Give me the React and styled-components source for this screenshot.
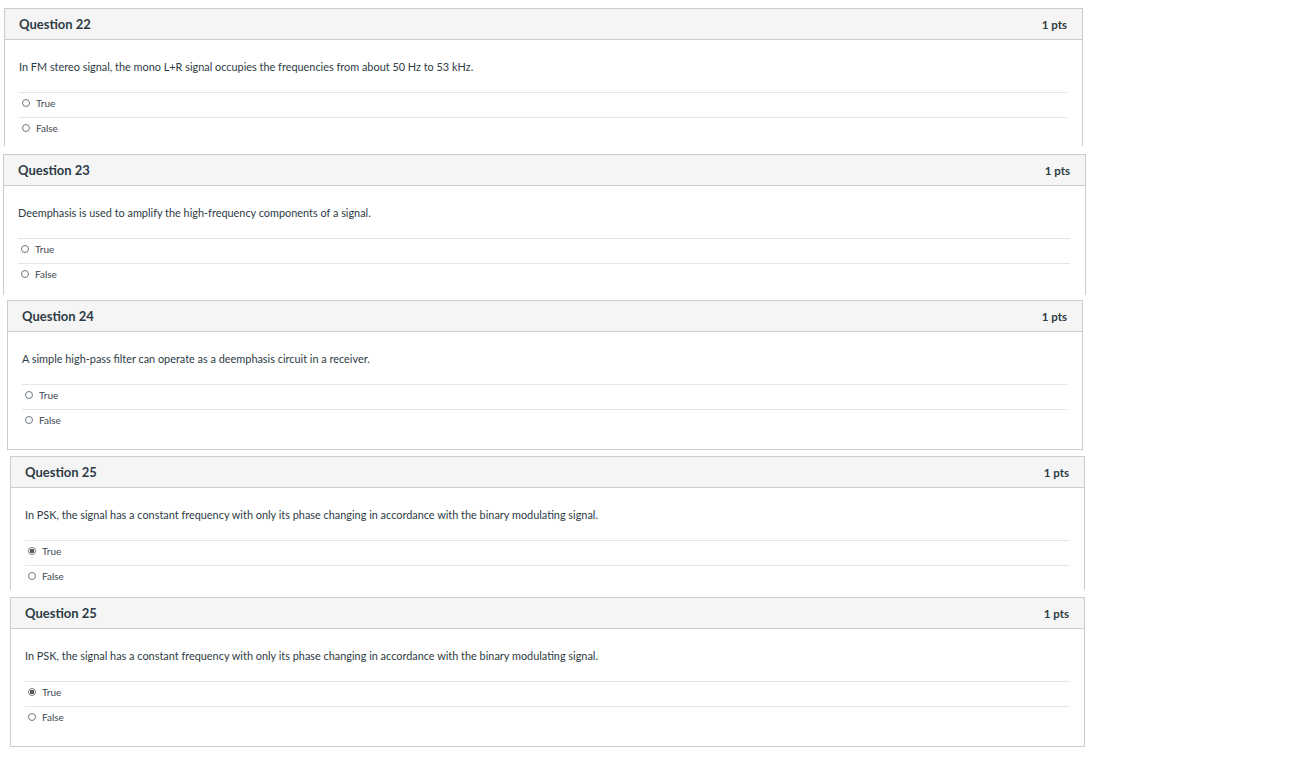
import React from "react";
import styled, { createGlobalStyle } from "styled-components";

const GlobalStyle = createGlobalStyle`
  html, body {
    margin: 0;
    padding: 0;
    background: #ffffff;
  }
  body {
    font-family: Lato, "Open Sans", "Liberation Sans", sans-serif;
    color: #2d3b45;
  }
`;

const questions = [
  {
    id: 1,
    title: "Question 22",
    text: "In FM stereo signal, the mono L+R signal occupies the frequencies from about 50 Hz to 53 kHz.",
    selected: null,
    offset: 4,
    width: 1079,
    gap: 8,
    cut: 138,
  },
  {
    id: 2,
    title: "Question 23",
    text: "Deemphasis is used to amplify the high-frequency components of a signal.",
    selected: null,
    offset: 3,
    width: 1083,
    gap: 8,
    cut: 141,
  },
  {
    id: 3,
    title: "Question 24",
    text: "A simple high-pass filter can operate as a deemphasis circuit in a receiver.",
    selected: null,
    offset: 7,
    width: 1076,
    gap: 5,
    cut: null,
  },
  {
    id: 4,
    title: "Question 25",
    text: "In PSK, the signal has a constant frequency with only its phase changing in accordance with the binary modulating signal.",
    selected: "True",
    offset: 10,
    width: 1075,
    gap: 6,
    cut: 134,
  },
  {
    id: 5,
    title: "Question 25",
    text: "In PSK, the signal has a constant frequency with only its phase changing in accordance with the binary modulating signal.",
    selected: "True",
    offset: 10,
    width: 1075,
    gap: 7,
    cut: null,
  },
];

function App() {
  return (
    <>
      <GlobalStyle />
      <Page>
        {questions.map((q) => (
          <Card
            key={q.id}
            $offset={q.offset}
            $width={q.width}
            $gap={q.gap}
            $cut={q.cut}
          >
            <Header>
              <Title>{q.title}</Title>
              <Points>1 pts</Points>
            </Header>
            <Body>
              <QuestionText>{q.text}</QuestionText>
              <Answers>
                {["True", "False"].map((a) => (
                  <Answer key={a}>
                    <Radio $checked={q.selected === a} />
                    <AnswerLabel>{a}</AnswerLabel>
                  </Answer>
                ))}
              </Answers>
            </Body>
          </Card>
        ))}
      </Page>
    </>
  );
}

export default App;

const Page = styled.div`
  display: flex;
  flex-direction: column;
  align-items: flex-start;
  width: 1301px;
  min-height: 758px;
  box-sizing: border-box;
`;

const Card = styled.section`
  box-sizing: border-box;
  width: ${(p) => p.$width}px;
  margin-left: ${(p) => p.$offset}px;
  margin-top: ${(p) => p.$gap}px;
  border: 1px solid #c7cdd1;
  border-bottom: ${(p) => (p.$cut ? "none" : "1px solid #c7cdd1")};
  height: ${(p) => (p.$cut ? `${p.$cut}px` : "auto")};
  overflow: hidden;
  background: #ffffff;
`;

const Header = styled.div`
  display: flex;
  align-items: center;
  justify-content: space-between;
  height: 30px;
  padding: 0 15px 0 14px;
  background: #f5f5f5;
  border-bottom: 1px solid #c7cdd1;
`;

const Title = styled.h2`
  margin: 0;
  font-size: 13px;
  font-weight: 700;
  color: #2d3b45;
`;

const Points = styled.span`
  font-size: 11.5px;
  font-weight: 700;
  color: #2d3b45;
`;

const Body = styled.div`
  padding: 20px 15px 15px 14px;
`;

const QuestionText = styled.p`
  margin: 0 0 18px;
  font-size: 10.9px;
  line-height: 14px;
  color: #2d3b45;
`;

const Answers = styled.div`
  display: flex;
  flex-direction: column;
`;

const Answer = styled.label`
  display: flex;
  align-items: center;
  gap: 6px;
  border-top: 1px solid #e3e6e8;
  padding: 3px 0 7px 3px;
  line-height: 14px;
`;

const Radio = styled.span`
  box-sizing: border-box;
  width: 8px;
  height: 8px;
  border-radius: 50%;
  border: 1px solid #6f7a82;
  background: ${(p) =>
    p.$checked ? "radial-gradient(circle, #555 0 2px, #fff 2.5px)" : "#fff"};
`;

const AnswerLabel = styled.span`
  font-size: 10px;
  color: #3d4852;
`;
